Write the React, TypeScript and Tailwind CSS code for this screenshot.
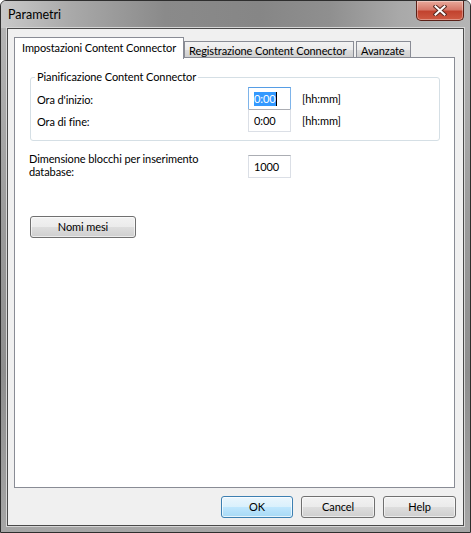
const font = { fontFamily: 'Lato, "Noto Sans", sans-serif' };

function CloseButton() {
  return (
    <div className="absolute right-[6px] top-0 flex h-[20px] w-[48px] items-center justify-center rounded-b-[5px] border border-t-0 border-[#5b2017] bg-[linear-gradient(to_bottom,#e9a99b_0%,#d7796a_45%,#c2432f_55%,#cf5a43_100%)] shadow-[inset_0_0_0_1px_rgba(255,255,255,0.35)]">
      <svg width="14" height="11" viewBox="0 0 14 11">
        <path d="M2.5 1.5 L11.5 9.5 M11.5 1.5 L2.5 9.5" stroke="#5a2a22" strokeWidth="4" strokeLinecap="square" />
        <path d="M2.5 1.5 L11.5 9.5 M11.5 1.5 L2.5 9.5" stroke="#ffffff" strokeWidth="2" strokeLinecap="square" />
      </svg>
    </div>
  );
}

function Tab({ label, active, width }: { label: string; active?: boolean; width: string }) {
  if (active) {
    return (
      <div
        className={`flex h-[22px] ${width} items-start whitespace-nowrap border border-b-0 border-[#898c95] bg-white pl-[7px] pt-[2px] leading-[16px] text-black`}
      >
        {label}
      </div>
    );
  }
  return (
    <div
      className={`mb-[1px] flex h-[17px] ${width} items-center whitespace-nowrap border border-[#898c95] bg-[linear-gradient(to_bottom,#f3f3f3_0%,#ebebeb_50%,#dddddd_51%,#cfcfcf_100%)] pl-[4px] pt-[1px] leading-[15px] text-black`}
    >
      {label}
    </div>
  );
}

function TextBox({ value, focused }: { value: string; focused?: boolean }) {
  return (
    <div
      className={`flex h-[23px] w-[43px] items-center border pl-[5px] ${
        focused
          ? "border-[#7eb4ea] border-t-[#569de5]"
          : "border-[#dbdfe6] border-t-[#abadb3]"
      } bg-white`}
    >
      {focused ? (
        <span className="flex items-center">
          <span className="bg-[#3399ff] leading-[14px] text-white">{value}</span>
          <span className="h-[14px] w-[1px] bg-black" />
        </span>
      ) : (
        <span className="leading-[14px] text-black">{value}</span>
      )}
    </div>
  );
}

function Button({ label, primary, width }: { label: string; primary?: boolean; width: string }) {
  return (
    <div
      className={`flex h-[22px] ${width} items-center justify-center rounded-[3px] border text-black ${
        primary
          ? "border-[#3c7fb1] bg-[linear-gradient(to_bottom,#eaf6fd_0%,#d9f0fc_50%,#bee6fd_51%,#a7d9f5_100%)] shadow-[inset_0_0_0_1px_rgba(255,255,255,0.7)]"
          : "border-[#707070] bg-[linear-gradient(to_bottom,#f2f2f2_0%,#ebebeb_50%,#dddddd_51%,#cfcfcf_100%)] shadow-[inset_0_0_0_1px_rgba(255,255,255,0.6)]"
      }`}
    >
      {label}
    </div>
  );
}

export default function App() {
  return (
    <div className="h-[533px] w-[471px] bg-white text-[11px] tracking-[-0.1px]" style={font}>
      <div className="relative flex h-[533px] w-[471px] flex-col rounded-t-[6px] border border-[#2e2e2e] bg-[linear-gradient(to_bottom,#b8b8b8_0%,#9c9c9c_40%,#8e8e8e_70%,#a6a6a6_100%)] px-[6px] pb-[6px]">
        {/* title bar */}
        <div className="absolute inset-x-0 top-0 h-[27px] rounded-t-[5px] bg-[linear-gradient(to_right,#c9c9c9_0%,#a9a9a9_15%,#8a8a8a_35%,#868686_55%,#8f8f8f_70%,#a9a9a9_85%,#b5b5b5_100%)]" />
        <div className="relative flex h-[27px] items-center pl-[1px] pt-[1px] text-[12.5px] tracking-normal text-black">
          Parametri
        </div>
        <CloseButton />

        {/* client area */}
        <div className="relative flex flex-1 flex-col border border-[#4a4a4a] bg-[#f0f0f0] pl-[6px] pr-[7px] pt-[8px] shadow-[0_0_0_1px_#d6d6d6]">
          <div className="relative z-10 flex h-[22px] items-end">
            <Tab label="Impostazioni Content Connector" active width="w-[170px]" />
            <Tab label="Registrazione Content Connector" width="w-[170px]" />
            <div className="w-[2px]" />
            <Tab label="Avanzate" width="w-[55px]" />
          </div>

          {/* tab page */}
          <div className="mt-[-2px] flex h-[431px] w-[441px] flex-col border border-[#898c95] bg-white text-black">
            <div className="relative ml-[15px] mt-[19px] h-[64px] w-[410px] rounded-[3px] border border-[#d5dfe5]">
              <div className="absolute left-[4px] top-[-9px] whitespace-nowrap bg-white px-[2px] leading-[15px]">
                Pianificazione Content Connector
              </div>
              <div className="flex flex-col pl-[6px] pt-[9px]">
                <div className="flex items-center">
                  <div className="w-[211px] pt-[3px]">Ora d'inizio:</div>
                  <TextBox value="0:00" focused />
                  <div className="ml-[11px] pt-[2px]">[hh:mm]</div>
                </div>
                <div className="mt-[-1px] flex items-center">
                  <div className="w-[211px] pt-[3px]">Ora di fine:</div>
                  <TextBox value="0:00" />
                  <div className="ml-[11px] pt-[2px]">[hh:mm]</div>
                </div>
              </div>
            </div>

            <div className="ml-[14px] mt-[14px] flex items-start">
              <div className="mt-[-3px] w-[219px] leading-[13px]">
                Dimensione blocchi per inserimento
                <br />
                database:
              </div>
              <TextBox value="1000" />
            </div>

            <div className="ml-[15px] mt-[38px]">
              <Button label="Nomi mesi" width="w-[106px]" />
            </div>
          </div>

          <div className="mt-[8px] flex justify-end gap-[8px]">
            <Button label="OK" primary width="w-[72px]" />
            <Button label="Cancel" width="w-[74px]" />
            <Button label="Help" width="w-[73px]" />
          </div>
        </div>
      </div>
    </div>
  );
}
